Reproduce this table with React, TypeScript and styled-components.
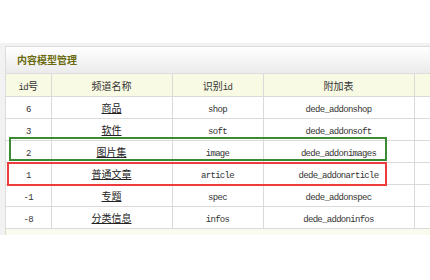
import React from 'react';
import styled, { createGlobalStyle } from 'styled-components';

const GlobalStyle = createGlobalStyle`
  html, body {
    margin: 0;
    padding: 0;
    background: #ffffff;
    overflow: hidden;
  }
  body {
    font-family: "Noto Sans CJK SC", "Liberation Sans", sans-serif;
  }
`;

const models = [
  { id: '6', name: '商品', nid: 'shop', table: 'dede_addonshop' },
  { id: '3', name: '软件', nid: 'soft', table: 'dede_addonsoft' },
  { id: '2', name: '图片集', nid: 'image', table: 'dede_addonimages' },
  { id: '1', name: '普通文章', nid: 'article', table: 'dede_addonarticle' },
  { id: '-1', name: '专题', nid: 'spec', table: 'dede_addonspec' },
  { id: '-8', name: '分类信息', nid: 'infos', table: 'dede_addoninfos' },
];

const colWidths = [45, 121, 91, 151, 60];

export default function App() {
  return (
    <>
      <GlobalStyle />
      <Page>
        <Panel>
          <Box>
            <TitleBar>内容模型管理</TitleBar>
            <Table>
              <colgroup>
                {colWidths.map((w, i) => (
                  <col key={i} style={{ width: w }} />
                ))}
              </colgroup>
              <thead>
                <tr>
                  <Th><Mono>id</Mono>号</Th>
                  <Th>频道名称</Th>
                  <Th>识别<Mono>id</Mono></Th>
                  <Th>附加表</Th>
                  <Th />
                </tr>
              </thead>
              <tbody>
                {models.map((m) => (
                  <tr key={m.id}>
                    <Td><Mono>{m.id}</Mono></Td>
                    <Td><NameLink>{m.name}</NameLink></Td>
                    <Td><Mono>{m.nid}</Mono></Td>
                    <Td><Mono>{m.table}</Mono></Td>
                    <Td />
                  </tr>
                ))}
              </tbody>
            </Table>
            <Footer />
          </Box>
          {/* annotation boxes drawn over the rows */}
          <Highlight $color="#3b8a34" style={{ left: 9, top: 94, width: 378, height: 24 }} />
          <Highlight $color="#ee3b3b" style={{ left: 7, top: 119, width: 380, height: 24 }} />
        </Panel>
      </Page>
    </>
  );
}

const Page = styled.div`
  width: 430px;
  height: 280px;
  padding-top: 43px;
  box-sizing: border-box;
  overflow: hidden;
`;

const Panel = styled.div`
  position: relative;
  width: 430px;
  box-sizing: border-box;
  overflow: hidden;
  background: #f2f2f2;
  padding: 3px 0 0 5px;
`;

const Box = styled.div`
  width: 475px;
  border: 1px solid #dcdcdc;
  border-bottom: none;
  background: #ffffff;
`;

const TitleBar = styled.div`
  height: 26px;
  line-height: 26px;
  padding-left: 11px;
  font-size: 10px;
  font-weight: bold;
  color: #6b6b0e;
  background: linear-gradient(#ffffff, #ebebeb);
  border-bottom: 1px solid #dedede;
`;

const Table = styled.table`
  border-collapse: collapse;
  table-layout: fixed;
  width: 468px;
`;

const Th = styled.th`
  height: 22px;
  padding: 0;
  font-weight: normal;
  font-size: 10px;
  color: #333333;
  background: #f9fae3;
  border-right: 1px solid #dadada;
  border-bottom: 1px solid #dadada;
  text-align: center;
`;

const Td = styled.td`
  height: 21px;
  padding: 0;
  font-size: 10px;
  color: #333333;
  border-right: 1px solid #dadada;
  border-bottom: 1px solid #dadada;
  text-align: center;
`;

const Mono = styled.span`
  font-family: "Liberation Mono", monospace;
  font-size: 9px;
  letter-spacing: -0.7px;
  color: #333333;
`;

const NameLink = styled.a`
  font-size: 10px;
  color: #222222;
  text-decoration: underline;
`;

const Footer = styled.div`
  height: 6px;
  background: #fafbee;
`;

const Highlight = styled.div<{ $color: string }>`
  position: absolute;
  box-sizing: border-box;
  border: 2px solid ${(p) => p.$color};
  pointer-events: none;
`;
